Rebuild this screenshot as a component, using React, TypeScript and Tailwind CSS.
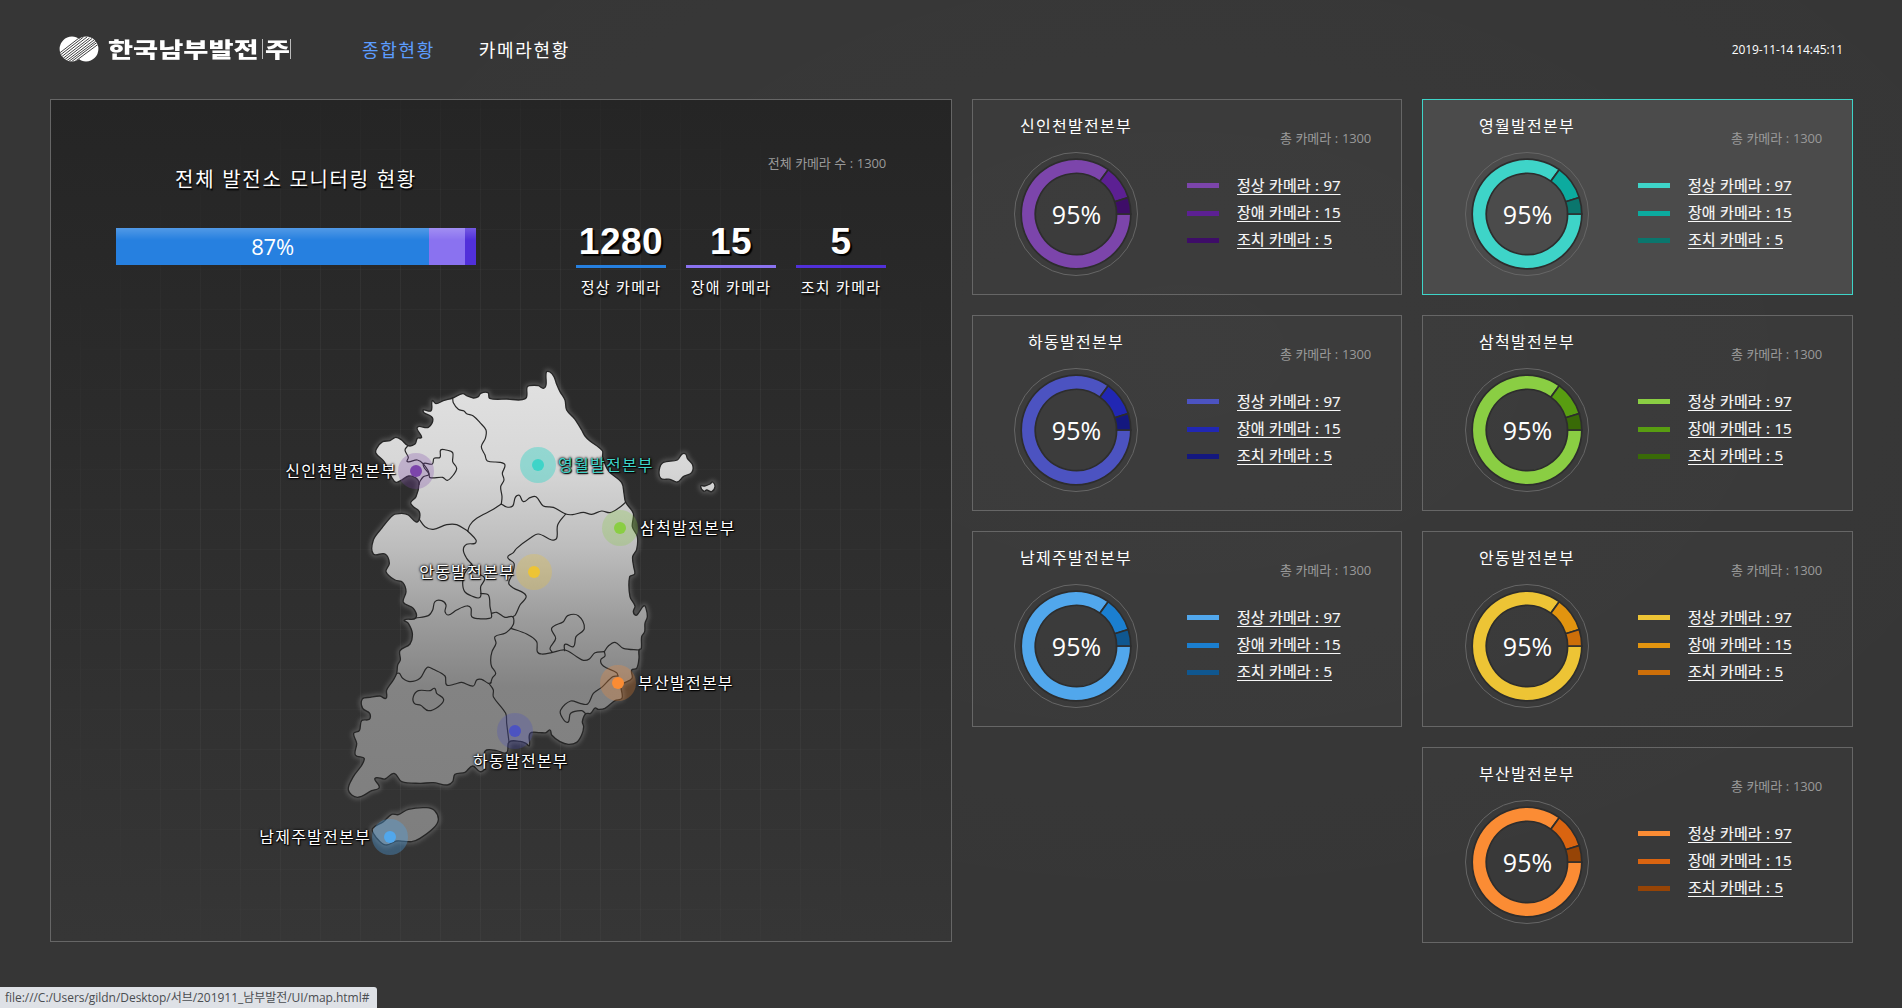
import React from "react";

type Pt = [number, number];

// Smooth path through a list of points (low-tension Catmull-Rom).
function curve(src: string, close = false): string {
  const p = src
    .trim()
    .split(/\s+/)
    .map((s) => s.split(",").map(Number) as Pt);
  const n = p.length;
  const at = (i: number): Pt => (close ? p[(i + n) % n] : p[Math.max(0, Math.min(n - 1, i))]);
  let d = `M${p[0][0]} ${p[0][1]}`;
  for (let i = 0; i < (close ? n : n - 1); i++) {
    const a = at(i - 1), b = at(i), c = at(i + 1), e = at(i + 2);
    const len = Math.hypot(c[0] - b[0], c[1] - b[1]);
    const l1 = Math.hypot(c[0] - a[0], c[1] - a[1]) || 1;
    const l2 = Math.hypot(e[0] - b[0], e[1] - b[1]) || 1;
    const k = len * 0.32;
    const x1 = b[0] + ((c[0] - a[0]) / l1) * k;
    const y1 = b[1] + ((c[1] - a[1]) / l1) * k;
    const x2 = c[0] - ((e[0] - b[0]) / l2) * k;
    const y2 = c[1] - ((e[1] - b[1]) / l2) * k;
    d += `C${x1.toFixed(1)} ${y1.toFixed(1)} ${x2.toFixed(1)} ${y2.toFixed(1)} ${c[0]} ${c[1]}`;
  }
  return close ? d + "Z" : d;
}

const MAINLAND =
  "307,152 318,161 340,152 368,144 398,131 412,138 430,144 445,140 452,130 474,128 479,145 530,147 586,146 591,112 598,107 625,107 640,115 648,105 649,66 660,66 672,80 680,103 690,125 705,150 710,180 735,208 755,240 765,258 779,272 817,302 818,320 835,362 875,398 882,430 887,457 910,490 907,530 922,560 920,598 908,620 911,650 914,672 899,680 900,740 915,768 910,785 918,796 927,787 942,767 948,775 952,800 945,820 944,845 935,860 934,895 927,900 927,925 920,955 905,960 906,985 880,1000 873,1010 876,1045 855,1052 825,1075 805,1078 795,1074 782,1090 767,1091 757,1115 761,1130 755,1155 740,1177 715,1183 690,1175 665,1155 660,1140 648,1148 630,1148 600,1150 598,1187 588,1180 570,1174 537,1176 530,1208 500,1202 470,1200 462,1215 465,1255 450,1265 428,1248 405,1267 375,1273 368,1295 352,1305 310,1298 270,1300 215,1295 192,1270 165,1287 135,1285 148,1312 125,1322 82,1342 55,1320 70,1280 103,1227 76,1215 80,1180 71,1150 88,1142 95,1112 118,1108 119,1090 98,1075 97,1047 120,1042 150,1038 168,1045 170,1020 190,990 200,970 203,945 211,930 210,902 240,882 247,850 235,820 223,810 257,804 250,775 220,757 228,725 218,697 195,690 168,665 178,640 165,612 130,612 130,570 155,535 190,495 215,490 235,495 258,516 267,510 268,485 250,470 242,458 258,440 267,400 258,384 236,378 215,390 198,397 185,382 168,345 160,332 138,310 140,295 158,275 180,272 197,262 215,270 234,287 255,282 262,265 275,262 262,232 295,232 308,205 282,188 280,180 303,182";

const BORDERS = [
  "368,144 370,158 385,178 402,183 410,191 430,198 450,218 468,240 466,265 454,290 465,315 472,333 510,337 525,345 517,370 522,390 512,410 516,440 514,462",
  "514,462 490,478 440,505 420,525 413,543",
  "268,508 285,530 310,538 350,524 380,524 413,543",
  "514,462 530,471 548,468 556,442 568,436 580,455 600,443 618,440 640,468 670,472 707,492 728,494 760,487 785,493 815,483 840,488 865,475 887,457",
  "707,492 683,525 680,565 665,570 625,552 600,565 560,595 550,608 533,622 552,640 548,670 536,700 550,714 588,737 570,765 556,795 548,800",
  "413,543 438,570 435,580 410,583 400,600 410,625 425,642",
  "425,642 403,672 398,700 404,725 425,738 450,742 452,710 464,684 440,668 425,642",
  "452,730 475,735 480,770 485,800 478,805 446,806 425,800 423,775 410,768 380,780 355,795 345,785 348,765 335,752 315,755 308,780 295,797 257,804",
  "485,790 500,787 525,802 548,800 551,820 543,835",
  "543,835 525,850 495,860 498,880 486,905 482,930 485,950 497,970 487,984 482,1000",
  "200,970 208,970 218,985 240,995 270,985 292,952 310,958 345,978 350,1005 375,1002 395,997 430,1008 440,990 455,988 475,1000 483,998",
  "478,1002 490,1020 490,1040 527,1090 530,1120 537,1176",
  "543,835 590,852 620,875 622,905 635,912 665,908 705,900 740,920 760,931 778,927 795,908 823,905",
  "667,907 660,895 677,865 665,835 700,815 713,797 745,797 763,835 738,860 730,890 705,883 704,902",
  "823,905 835,888 855,877 880,895 927,900",
  "823,905 825,918 812,930 820,948 860,968 864,978",
  "864,978 848,980 815,1012 790,1030 773,1062 750,1060 722,1053 692,1080 695,1100 713,1117 722,1090 755,1082 767,1091",
  "234,287 225,300 235,322 232,335 262,330 280,342 297,372 280,380 270,394 267,404",
];

const LOOPS = [
  "250,1040 265,1022 300,1022 314,1015 320,1030 341,1048 325,1070 295,1082 272,1066 253,1060",
  "280,342 307,342 312,325 330,322 332,300 348,300 368,308 368,335 380,355 370,375 352,391 338,382 300,383 297,372",
];

const ISLANDS = [
  "988,358 1000,337 1042,330 1055,313 1067,312 1072,325 1088,345 1085,368 1060,380 1042,396 1020,388 992,385",
  "1112,408 1124,408 1140,402 1148,396 1155,410 1145,425 1130,420 1122,424",
  "128,1435 160,1415 185,1393 205,1394 235,1378 290,1373 315,1383 325,1410 310,1435 270,1465 245,1475 200,1473 170,1485 150,1475 130,1450",
];

function KoreaMap() {
  const land = [MAINLAND, ...ISLANDS].map((s) => curve(s, true)).join("");
  return (
    <svg viewBox="0 0 1230 1560" className="absolute left-[279px] top-[250px] h-[520px] w-[410px] overflow-visible">
      <defs>
        <linearGradient id="land" gradientUnits="userSpaceOnUse" x1="0" y1="60" x2="0" y2="1500">
          <stop offset="0" stopColor="#e2e2e2" />
          <stop offset="0.2" stopColor="#d7d7d7" />
          <stop offset="0.37" stopColor="#bdbdbd" />
          <stop offset="0.52" stopColor="#9c9c9c" />
          <stop offset="0.66" stopColor="#838383" />
          <stop offset="1" stopColor="#7e7e7e" />
        </linearGradient>
        <filter id="glow" x="-10%" y="-10%" width="120%" height="120%">
          <feGaussianBlur stdDeviation="7" />
        </filter>
      </defs>
      <path d={land} fill="none" stroke="#a8a8a8" strokeOpacity="0.35" strokeWidth="13" filter="url(#glow)" />
      <path d={land} fill="url(#land)" stroke="#262626" strokeWidth="4" strokeLinejoin="round" />
      <g fill="none" stroke="#282828" strokeWidth="3.6" strokeLinejoin="round" strokeLinecap="round">
        {BORDERS.map((b) => (
          <path key={b} d={curve(b)} />
        ))}
        {LOOPS.map((b) => (
          <path key={b} d={curve(b, true)} />
        ))}
      </g>
    </svg>
  );
}

type Pin = { name: string; x: number; y: number; color: string; halo: number; place: string };

const PINS: Pin[] = [
  { name: "신인천발전본부", x: 365, y: 371, color: "#7c45ab", halo: 0.27, place: "right-[19px] -top-[12px]" },
  { name: "영월발전본부", x: 487, y: 365, color: "#3ed4c8", halo: 0.45, place: "left-[20px] -top-[12px] text-[#3ed4c8]" },
  { name: "삼척발전본부", x: 569, y: 428, color: "#8ace43", halo: 0.27, place: "left-[20px] -top-[12px]" },
  { name: "안동발전본부", x: 483, y: 472, color: "#edc435", halo: 0.27, place: "right-[19px] -top-[12px]" },
  { name: "부산발전본부", x: 567, y: 583, color: "#fb8c34", halo: 0.27, place: "left-[20px] -top-[12px]" },
  { name: "하동발전본부", x: 464, y: 631, color: "#4c53c1", halo: 0.27, place: "-left-[42px] top-[18px]" },
  { name: "남제주발전본부", x: 339, y: 737, color: "#51a7ec", halo: 0.35, place: "right-[19px] -top-[12px]" },
];

function MapPin({ pin }: { pin: Pin }) {
  return (
    <div className="absolute size-0" style={{ left: pin.x, top: pin.y }}>
      <svg viewBox="-18 -18 36 36" className="absolute -left-[18px] -top-[18px] size-9">
        <circle r="18" fill={pin.color} fillOpacity={pin.halo} />
        <circle r="6" fill={pin.color} />
      </svg>
      <span
        className={`absolute text-base leading-6 tracking-[1.25px] whitespace-nowrap [text-shadow:1px_1px_1px_#000,0_0_2px_#000,0_0_3px_#000] ${pin.place}`}
      >
        {pin.name}
      </span>
    </div>
  );
}

type Plant = { name: string; colors: [string, string, string]; active?: boolean };

const PLANTS: (Plant | null)[] = [
  { name: "신인천발전본부", colors: ["#7c45ab", "#5c2093", "#3e0d68"] },
  { name: "영월발전본부", colors: ["#3ed4c8", "#0cab9f", "#0a766d"], active: true },
  { name: "하동발전본부", colors: ["#4c53c1", "#2127b3", "#14187f"] },
  { name: "삼척발전본부", colors: ["#8ace43", "#589d11", "#396a07"] },
  { name: "남제주발전본부", colors: ["#51a7ec", "#1b7fd0", "#0f5790"] },
  { name: "안동발전본부", colors: ["#edc435", "#e2940f", "#cd6f09"] },
  null,
  { name: "부산발전본부", colors: ["#fb8c34", "#da6410", "#964406"] },
];

function arc(from: number, to: number) {
  const pt = (deg: number, r: number) => {
    const a = (deg * Math.PI) / 180;
    return `${(r * Math.cos(a)).toFixed(2)} ${(-r * Math.sin(a)).toFixed(2)}`;
  };
  const big = to - from > 180 ? 1 : 0;
  return `M${pt(from, 54.8)}A54.8 54.8 0 ${big} 0 ${pt(to, 54.8)}L${pt(to, 40.6)}A40.6 40.6 0 ${big} 1 ${pt(from, 40.6)}Z`;
}

function Donut({ colors }: { colors: Plant["colors"] }) {
  return (
    <div className="relative flex size-[126px] items-center justify-center">
      <svg viewBox="-63 -63 126 126" className="absolute inset-0">
        <circle r="61.5" fill="none" stroke="#666" strokeWidth="1" />
        <g stroke="#2d2d2d" strokeWidth="1.7">
          <path d={arc(54, 360)} fill={colors[0]} />
          <path d={arc(17.5, 54)} fill={colors[1]} />
          <path d={arc(0, 17.5)} fill={colors[2]} />
        </g>
      </svg>
      <span className="relative left-[0.5px] text-[25px] leading-none">95%</span>
    </div>
  );
}

const LEGEND = ["정상 카메라 : 97", "장애 카메라 : 15", "조치 카메라 : 5"];

function PlantCard({ plant }: { plant: Plant }) {
  return (
    <article
      className={`flex h-[196px] border even:pl-px ${
        plant.active ? "border-[#3ed4c8] bg-[#4b4b4b]" : "border-[#666] bg-white/[0.015]"
      }`}
    >
      <div className="flex w-[206px] flex-col items-center pt-[14px]">
        <h3 className="text-base leading-6 tracking-[1.25px]">{plant.name}</h3>
        <div className="mt-[13px]">
          <Donut colors={plant.colors} />
        </div>
      </div>
      <div className="flex-1 pt-[30px] pr-[30px] pl-[8px]">
        <p className="text-right text-[13px] leading-4 tracking-[-0.2px] text-[#999] [word-spacing:0.8px]">
          총 카메라 : 1300
        </p>
        <ul className="mt-[26px] flex flex-col">
          {LEGEND.map((label, i) => (
            <li key={label} className="flex h-[27.4px] items-center gap-[18px]">
              <svg className="h-[5px] w-8">
                <rect width="32" height="5" fill={plant.colors[i]} />
              </svg>
              <a
                href="#"
                className="relative -top-px text-[15px] leading-5 text-[#f8f8f8] underline decoration-1 underline-offset-[3px] [-webkit-text-stroke:0.15px_#f8f8f8] [word-spacing:0.6px]"
              >
                {label}
              </a>
            </li>
          ))}
        </ul>
      </div>
    </article>
  );
}

function Logo() {
  return (
    <div className="relative -top-px flex items-center">
      <svg viewBox="0 0 40 26" className="h-[26px] w-10">
        <defs>
          <clipPath id="discs">
            <path d="M13 0.5C16 0.5 18.5 1.500 20 3C21.500 1.500 24 0.5 27 0.5A12.400 12.500 0 0 1 27 25.500C24 25.500 21.500 24.500 20 23C18.500 24.500 16 25.500 13 25.500A12.400 12.500 0 0 1 13 0.5Z" />
          </clipPath>
        </defs>
        <g clipPath="url(#discs)">
          <rect width="40" height="26" fill="#fff" />
          <g stroke="#363636" strokeWidth="0.95">
            <path d="M0 17.500L20 2M0 20L24.500 1M1 22L28 1M2 24L30.500 2M4 25L33 2.500M6 26L35 4M9 26L37 5M12 26L38.500 6M16 25.500L39.500 8" />
          </g>
        </g>
      </svg>
      <span className="ml-[9px] flex h-6 w-[150px] items-center">
        <span className="relative -top-px origin-left scale-x-[1.24] scale-y-95 text-[22px] leading-6 font-black whitespace-nowrap">
          한국남부발전
        </span>
      </span>
      <span className="ml-[4px] flex h-5 w-[29px] items-center border-x border-[#bbb] pl-[2px]">
        <span className="relative -top-px origin-left scale-x-[1.23] scale-y-95 text-[22px] leading-6 font-black">주</span>
      </span>
    </div>
  );
}

const STATS = [
  { value: "1280", label: "정상 카메라", line: "border-[#2680e0]" },
  { value: "15", label: "장애 카메라", line: "border-[#8a72f0]" },
  { value: "5", label: "조치 카메라", line: "border-[#5130da]" },
];

export default function App() {
  return (
    <div className="relative h-[1008px] w-[1902px] overflow-hidden bg-[#363636] bg-[radial-gradient(ellipse_50%_60%_at_62%_35%,rgba(255,255,255,0.02),transparent)] font-['Open_Sans','Noto_Sans_CJK_KR',sans-serif] text-white">
      <header className="flex h-[99px] items-center pr-[59px] pl-[59px]">
        <Logo />
        <nav className="ml-[71px] flex gap-[44px] text-lg leading-6 tracking-[1.65px]">
          <a href="#" className="text-[#5c9dff]">종합현황</a>
          <a href="#">카메라현황</a>
        </nav>
        <time className="ml-auto text-xs tracking-[-0.1px]">2019-11-14 14:45:11</time>
      </header>

      <main className="flex gap-5 pr-[49px] pl-[50px]">
        <section className="relative h-[843px] w-[902px] border border-[#666] bg-linear-to-b from-[#252525] to-[#363636]">
          <div className="absolute inset-0 bg-[linear-gradient(to_right,rgba(255,255,255,0.045)_1px,transparent_1px),linear-gradient(to_bottom,rgba(255,255,255,0.025)_1px,transparent_1px)] bg-size-[40px_40px] bg-position-[29px_9px] mask-[radial-gradient(ellipse_58%_62%_at_50%_55%,#000_60%,transparent)]" />
          <KoreaMap />
          <div className="relative flex justify-between pt-[50px] pr-[65px] pl-[65px]">
            <div className="w-[360px] pt-[15px] text-center">
              <h2 className="text-xl leading-[30px] tracking-[1.7px] [text-shadow:1px_2px_1px_#000]">전체 발전소 모니터링 현황</h2>
              <div className="relative mt-[33px] flex h-[37px] text-[22px] leading-[36px]">
                <div className="w-[87%] bg-[#2680e0] tracking-[-0.2px]">87%</div>
                <div className="w-[10%] bg-[#8a72f0]" />
                <div className="w-[3%] bg-[#5130da]" />
                <div className="absolute inset-x-0 top-0 h-3 bg-linear-to-b from-white/20 to-transparent" />
              </div>
            </div>
            <div>
              <p className="pt-[5px] text-right text-[13px] leading-4 tracking-[-0.15px] text-[#999] [word-spacing:0.5px]">
                전체 카메라 수 : 1300
              </p>
              <div className="mt-[50px] flex gap-5 text-center">
                {STATS.map((s) => (
                  <div key={s.label} className="w-[90px]">
                    <div
                      className={`h-[47px] border-b-[3px] font-['Liberation_Sans',sans-serif] text-[37px] leading-[42px] font-bold tracking-[0.5px] [text-shadow:2px_2px_1px_#000] ${s.line}`}
                    >
                      {s.value}
                    </div>
                    <div className="mt-[7px] text-[15px] leading-6 tracking-[1.3px] [text-shadow:1px_2px_2px_#000]">{s.label}</div>
                  </div>
                ))}
              </div>
            </div>
          </div>
          {PINS.map((p) => (
            <MapPin key={p.name} pin={p} />
          ))}
        </section>

        <section className="grid flex-1 auto-rows-max grid-cols-[430px_431px] gap-5">
          {PLANTS.map((p, i) => (p ? <PlantCard key={p.name} plant={p} /> : <div key={i} />))}
        </section>
      </main>

      <div className="absolute bottom-0 left-0 flex h-[21px] w-[377px] items-center rounded-tr-[3px] bg-[#dee1e6] pl-[5px] text-xs tracking-[-0.04px] whitespace-nowrap text-[#4a4d51]">
        file:///C:/Users/gildn/Desktop/서브/201911_남부발전/UI/map.html#
      </div>
    </div>
  );
}
